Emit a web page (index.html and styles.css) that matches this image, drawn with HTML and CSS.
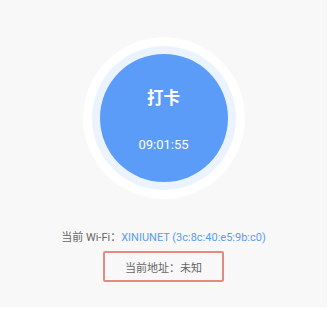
FILE: index.html
```html
<!DOCTYPE html>
<html>
<head>
<meta charset="utf-8">
<link rel="stylesheet" href="styles.css">
</head>
<body>
<div class="page">
  <div class="halo">
    <div class="ring">
      <div class="btn">
        <div class="btn-title">打卡</div>
        <div class="btn-time">09:01:55</div>
      </div>
    </div>
  </div>
  <div class="wifi">当前 Wi-Fi：<span class="wifi-name">XINIUNET (3c:8c:40:e5:9b:c0)</span></div>
  <div class="addr">当前地址：未知</div>
</div>
</body>
</html>
```
FILE: styles.css
```css
html, body {
  margin: 0;
  padding: 0;
  background: #ffffff;
}
.page {
  width: 327px;
  height: 307px;
  background: #f8f8f8;
  display: flex;
  flex-direction: column;
  align-items: center;
  box-sizing: border-box;
  padding-top: 37px;
  font-family: Roboto, "Noto Sans CJK SC", sans-serif;
}
.halo {
  width: 162px;
  height: 162px;
  border-radius: 50%;
  background: #ffffff;
  display: flex;
  align-items: center;
  justify-content: center;
}
.ring {
  width: 144px;
  height: 144px;
  border-radius: 50%;
  background: #eaf3fe;
  display: flex;
  align-items: center;
  justify-content: center;
}
.btn {
  width: 128px;
  height: 128px;
  border-radius: 50%;
  background: #5b9cf9;
  color: #ffffff;
  display: flex;
  flex-direction: column;
  align-items: center;
  box-sizing: border-box;
  padding-top: 34px;
}
.btn-title {
  font-size: 16.5px;
  font-weight: bold;
  line-height: 22px;
}
.btn-time {
  margin-top: 26px;
  font-size: 13px;
  line-height: 18px;
}
.wifi {
  margin-top: 31px;
  font-size: 11px;
  line-height: 16px;
  color: #666666;
}
.wifi-name {
  color: #5a9cf0;
}
.addr {
  margin-top: 5px;
  width: 121px;
  height: 31px;
  box-sizing: border-box;
  border: 2px solid #e58a82;
  border-radius: 2px;
  display: flex;
  align-items: center;
  justify-content: center;
  font-size: 11px;
  color: #666666;
}
```
